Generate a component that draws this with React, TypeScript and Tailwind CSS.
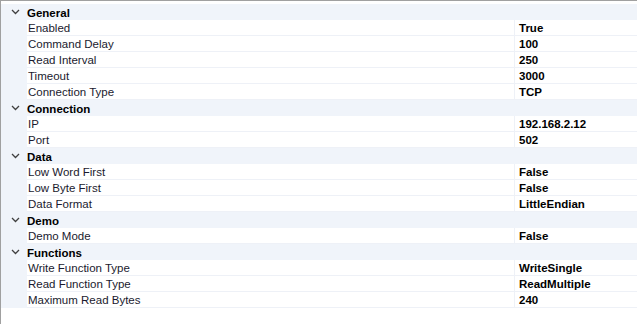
const groups: { name: string; items: [string, string][] }[] = [
  {
    name: "General",
    items: [
      ["Enabled", "True"],
      ["Command Delay", "100"],
      ["Read Interval", "250"],
      ["Timeout", "3000"],
      ["Connection Type", "TCP"],
    ],
  },
  { name: "Connection", items: [["IP", "192.168.2.12"], ["Port", "502"]] },
  {
    name: "Data",
    items: [
      ["Low Word First", "False"],
      ["Low Byte First", "False"],
      ["Data Format", "LittleEndian"],
    ],
  },
  { name: "Demo", items: [["Demo Mode", "False"]] },
  {
    name: "Functions",
    items: [
      ["Write Function Type", "WriteSingle"],
      ["Read Function Type", "ReadMultiple"],
      ["Maximum Read Bytes", "240"],
    ],
  },
];

function Chevron() {
  return (
    <svg width="9" height="6" viewBox="0 0 9 6" className="text-[#404040]">
      <path d="M1 1 L4.5 4.5 L8 1" fill="none" stroke="currentColor" strokeWidth="1.3" />
    </svg>
  );
}

export default function App() {
  return (
    <div
      className="w-[637px] h-[324px] bg-white border-t border-l border-[#a0a0a0] text-[11.5px] leading-[16px] text-[#1a1a2e] pt-[3px] overflow-hidden"
      style={{ fontFamily: '"Liberation Sans", Arial, sans-serif' }}
    >
      {groups.map((g) => (
        <div key={g.name}>
          <div className="h-[16px] flex items-center bg-[#f0f4fa] overflow-hidden">
            <div className="w-[26px] flex justify-center pl-[2px]">
              <Chevron />
            </div>
            <span className="font-bold text-black pt-[1px]">{g.name}</span>
          </div>
          {g.items.map(([k, v]) => (
            <div key={k} className="h-[16px] flex overflow-hidden">
              <div className="w-[26px] h-[16px] bg-[#f0f4fa] shrink-0" />
              <div className="w-[488px] h-[16px] shrink-0 pl-[1px] border-b border-[#eef1f7] border-r">
                {k}
              </div>
              <div className="flex-1 h-[16px] pl-[4px] font-bold text-black border-b border-[#eef1f7]">
                {v}
              </div>
            </div>
          ))}
        </div>
      ))}
    </div>
  );
}
